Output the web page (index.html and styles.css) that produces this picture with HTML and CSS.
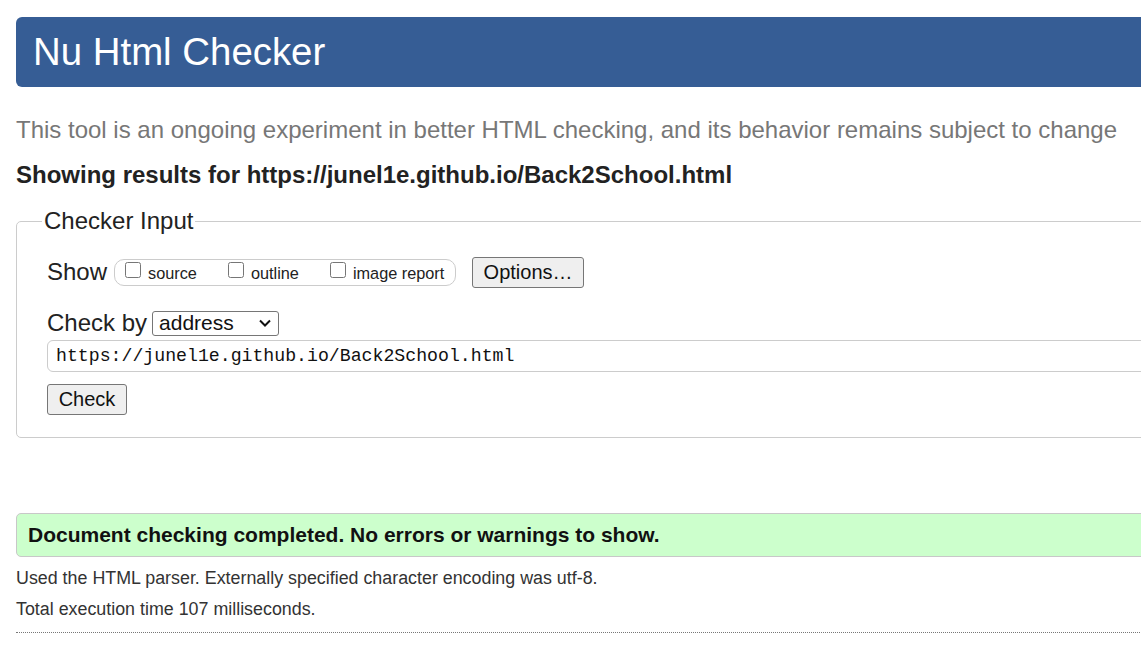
FILE: index.html
```html
<!DOCTYPE html>
<html>
<head>
<meta charset="utf-8">
<title>Nu Html Checker</title>
<link rel="stylesheet" href="styles.css">
</head>
<body>
<div class="page">
  <h1 class="banner">Nu Html Checker</h1>
  <p class="tagline">This tool is an ongoing experiment in better HTML checking, and its behavior remains subject to change</p>
  <p class="showing">Showing results for https://junel1e.github.io/Back2School.html</p>
  <fieldset class="inputs">
    <legend>Checker Input</legend>
    <div class="row show-row">
      <span class="label">Show</span>
      <span class="pill">
        <label class="opt"><input type="checkbox">source</label>
        <label class="opt"><input type="checkbox">outline</label>
        <label class="opt"><input type="checkbox">image report</label>
      </span>
      <button class="btn options">Options…</button>
    </div>
    <div class="row by-row">
      <span class="label">Check by</span>
      <span class="select">address
        <svg class="chev" width="14" height="10" viewBox="0 0 14 10"><path d="M2 2.5 L7 7.5 L12 2.5" fill="none" stroke="#111" stroke-width="2"/></svg>
      </span>
    </div>
    <div class="url">https://junel1e.github.io/Back2School.html</div>
    <button class="btn check">Check</button>
  </fieldset>
  <div class="success">Document checking completed. No errors or warnings to show.</div>
  <p class="details">Used the HTML parser. Externally specified character encoding was utf-8.</p>
  <p class="details time">Total execution time 107 milliseconds.</p>
  <hr class="dots">
</div>
</body>
</html>
```
FILE: styles.css
```css
html, body {
  margin: 0;
  padding: 0;
  overflow: hidden;
  background: #fff;
}
body {
  font-family: "Liberation Sans", Arial, sans-serif;
  color: #222;
}
.page {
  width: 1200px;
  padding: 17px 0 0 16px;
}
.banner {
  margin: 0;
  height: 70px;
  box-sizing: border-box;
  background: #365d95;
  color: #fff;
  font-weight: normal;
  font-size: 38.4px;
  line-height: 70px;
  padding-left: 17px;
  border-radius: 6px;
}
.tagline {
  margin: 29px 0 0;
  font-size: 24px;
  line-height: 28px;
  color: #777;
}
.showing {
  margin: 17px 0 0;
  font-size: 24px;
  line-height: 28px;
  font-weight: bold;
  color: #222;
}
.inputs {
  margin: 18px 0 0;
  border: 1px solid #ccc;
  border-radius: 5px;
  padding: 22px 0 22px 30px;
}
.inputs legend {
  font-size: 24px;
  line-height: 28px;
  padding: 0 2px;
  margin-left: -5px;
  color: #222;
}
.row {
  display: flex;
  align-items: center;
}
.label {
  font-size: 24px;
  line-height: 28px;
  color: #222;
}
.show-row {
  height: 30px;
}
.pill {
  display: flex;
  align-items: center;
  margin-left: 7px;
  height: 27px;
  width: 342px;
  box-sizing: border-box;
  border: 1px solid #ccc;
  border-radius: 10px;
  padding-left: 10px;
  gap: 31px;
}
.opt {
  font-size: 16.3px;
  display: flex;
  align-items: center;
  color: #222;
  padding-top: 3px;
}
.opt input {
  width: 16px;
  height: 16px;
  margin: -8px 7px 0 0;
}
.btn {
  font-family: "Liberation Sans", Arial, sans-serif;
  font-size: 20px;
  background: #efefef;
  border: 1px solid #767676;
  border-radius: 3px;
  color: #111;
  padding: 0;
}
.options {
  margin-left: 16px;
  width: 112px;
  height: 31px;
}
.by-row {
  margin-top: 22px;
}
.select {
  margin-left: 5px;
  width: 127px;
  height: 25px;
  box-sizing: border-box;
  border: 1px solid #767676;
  border-radius: 3px;
  font-size: 21px;
  display: flex;
  align-items: center;
  justify-content: space-between;
  padding: 0 6px 0 6px;
  color: #111;
}
.url {
  margin-top: 3px;
  height: 32px;
  box-sizing: border-box;
  border: 1px solid #ccc;
  border-radius: 6px;
  font-family: "Liberation Mono", "DejaVu Sans Mono", monospace;
  font-size: 18.2px;
  line-height: 30px;
  padding-left: 8px;
  color: #111;
}
.check {
  display: block;
  margin-top: 12px;
  width: 80px;
  height: 31px;
}
.success {
  margin-top: 75px;
  height: 44px;
  box-sizing: border-box;
  background: #ccffcc;
  border: 1px solid #c8c8c8;
  border-radius: 5px;
  font-weight: bold;
  font-size: 21px;
  line-height: 42px;
  padding-left: 11px;
  color: #111;
}
.details {
  margin: 10px 0 0;
  font-size: 17.85px;
  line-height: 22px;
  color: #333;
}
.time {
  margin-top: 9px;
}
.dots {
  margin: 12px 0 0;
  border: 0;
  border-top: 1px dotted #777;
  height: 0;
}
```
